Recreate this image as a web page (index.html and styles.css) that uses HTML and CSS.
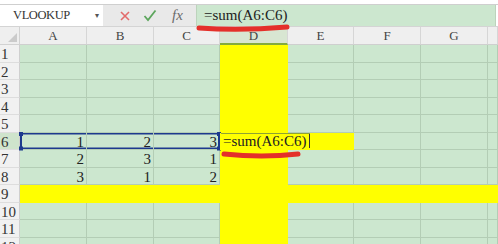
FILE: index.html
```
<!DOCTYPE html>
<html>
<head>
    <link rel="stylesheet" href="styles.css">
</head>
<body>
    <div class="toolbar">
        <div class="name-box">
            <span class="name-text">VLOOKUP</span>
            <span class="name-caret">▾</span>
        </div>
        <div class="tools">
            <svg class="tool-icon" width="12" height="12" viewBox="0 0 12 12">
                <path d="M2 2 L10 10 M10 2 L2 10" stroke="#e36a6a" stroke-width="1.6" fill="none"/>
            </svg>
            <svg class="tool-icon" width="14" height="13" viewBox="0 0 14 13">
                <path d="M1.5 7 L5 11 L12.5 1.5" stroke="#5da65d" stroke-width="1.8" fill="none"/>
            </svg>
            <span class="fx">fx</span>
        </div>
        <div class="formula-bar">=sum(A6:C6)</div>
    </div>

    <div class="sheet"></div>

    <!-- red pen marks drawn over the screenshot -->
    <svg class="marks" width="498" height="244" viewBox="0 0 498 244">
        <path d="M199 28 Q 240 31 287 27" stroke="#e4302a" stroke-width="5" stroke-linecap="round" fill="none"/>
        <path d="M224 154 Q 262 158 298 154" stroke="#e4302a" stroke-width="5" stroke-linecap="round" fill="none"/>
    </svg>

    <script>
        document.addEventListener('DOMContentLoaded', function() {
            const sheet = document.querySelector('.sheet');
            const cols = ['A', 'B', 'C', 'D', 'E', 'F', 'G', ''];
            const data = {
                6: ['1', '2', '3'],
                7: ['2', '3', '1'],
                8: ['3', '1', '2']
            };

            function addCell(cls, text) {
                const div = document.createElement('div');
                div.className = cls;
                if (text) div.textContent = text;
                sheet.appendChild(div);
                return div;
            }

            // Column headers
            addCell('corner');
            cols.forEach((c, i) => {
                addCell('col-head' + (i === 3 ? ' active' : ''), c);
            });

            // Rows
            for (let r = 1; r <= 12; r++) {
                addCell('row-head' + (r === 6 ? ' active' : ''), String(r));
                cols.forEach((c, i) => {
                    let cls = 'cell';
                    if (i === 3 || r === 9 || (r === 6 && i === 4)) cls += ' yellow';
                    if (r === 6 && i < 3) {
                        cls += ' sel';
                        if (i === 0) cls += ' sel-first';
                        if (i === 2) cls += ' sel-last';
                    }
                    const value = data[r] && i < 3 ? data[r][i] : '';
                    const cell = addCell(cls, value);

                    // Cell being edited
                    if (r === 6 && i === 3) {
                        cell.classList.add('editing');
                        const editor = document.createElement('div');
                        editor.className = 'editor';
                        editor.innerHTML = '<span>=sum(A6:C6)</span><span class="text-caret"></span>';
                        cell.appendChild(editor);
                    }
                });
            }
        });
    </script>
</body>
</html>
```

FILE: styles.css
```
:root {
    --sheet-green: #cce7cf;
    --grid-line: #b3cdb5;
    --header-bg: #efefef;
    --select-blue: #1d3a8e;
    --mark-yellow: #ffff00;
}

body {
    margin: 0;
    padding-top: 4px;
    width: 498px;
    height: 244px;
    overflow: hidden;
    background: white;
    font-family: "Liberation Serif", "DejaVu Serif", serif;
    color: #222;
    position: relative;
}

.toolbar {
    display: flex;
    height: 23px;
    box-sizing: border-box;
    border-top: 1px solid #cfcfcf;
    border-bottom: 1px solid #d4d4d4;
}

.name-box {
    width: 103px;
    display: flex;
    align-items: center;
    background: white;
    box-sizing: border-box;
    padding-left: 13px;
}

.name-text {
    font-size: 12.5px;
    color: #333;
    letter-spacing: -0.4px;
}

.name-caret {
    margin-left: auto;
    margin-right: 4px;
    font-size: 8px;
    color: #555;
}

.tools {
    width: 93px;
    display: flex;
    align-items: center;
    background: #e9e9e9;
    box-sizing: border-box;
    padding-left: 16px;
    gap: 12px;
}

.fx {
    font-style: italic;
    font-size: 15px;
    color: #6b6b6b;
    margin-left: 3px;
}

.formula-bar {
    flex: 1;
    margin-right: 2px;
    background: var(--sheet-green);
    border-left: 1px solid #bcd3bc;
    border-right: 1px solid #bcd3bc;
    font-size: 15px;
    line-height: 21px;
    padding-left: 7px;
    letter-spacing: 0;
    color: #222;
}

.sheet {
    display: grid;
    grid-template-columns: 20px 67px 67px 66px 68px 66px 67px 67px 10px;
    grid-template-rows: 18px repeat(12, 17.5px);
}

.corner {
    background: var(--header-bg);
    border-right: 1px solid #d2d2d2;
    border-bottom: 1px solid #d2d2d2;
    box-sizing: border-box;
    position: relative;
}

.corner::after {
    content: '';
    position: absolute;
    right: 2px;
    bottom: 2px;
    border-left: 9px solid transparent;
    border-bottom: 9px solid #cbcbcb;
}

.col-head {
    background: var(--header-bg);
    border-right: 1px solid #d6d6d6;
    border-bottom: 1px solid #cfcfcf;
    box-sizing: border-box;
    text-align: center;
    font-size: 13px;
    line-height: 17px;
    color: #444;
}

.col-head.active {
    background: #d8e6d2;
    border-bottom: 2px solid #83ab3e;
}

.row-head {
    background: #f1f1f1;
    border-right: 1px solid #cfcfcf;
    border-bottom: 1px solid #dddddd;
    box-sizing: border-box;
    font-size: 15px;
    line-height: 18px;
    padding-left: 1px;
    color: #333;
    overflow: hidden;
}

.row-head.active {
    background: #cfe4cc;
}

.cell {
    background: var(--sheet-green);
    border-right: 1px solid var(--grid-line);
    border-bottom: 1px solid var(--grid-line);
    box-sizing: border-box;
    text-align: right;
    font-size: 15px;
    line-height: 18px;
    padding-right: 2px;
    color: #222;
}

.cell.yellow {
    background: var(--mark-yellow);
    border-color: var(--mark-yellow);
}

.sel {
    box-shadow: inset 0 1.5px 0 var(--select-blue), inset 0 -1.5px 0 var(--select-blue);
    position: relative;
}

.sel-first::before,
.sel-last::before {
    content: '';
    position: absolute;
    top: 0;
    bottom: 0;
    width: 2px;
    background: var(--select-blue);
}

.sel-first::before {
    left: 0;
}

.sel-last::before {
    right: -1px;
}

.sel-first::after,
.sel-last::after {
    content: '';
    position: absolute;
    top: -1px;
    width: 4px;
    height: 4px;
    background: var(--select-blue);
    box-shadow: 0 14.5px 0 var(--select-blue);
}

.sel-first::after {
    left: -1px;
}

.sel-last::after {
    right: -2px;
}

.editing {
    position: relative;
}

.editor {
    position: absolute;
    left: 1px;
    top: 0;
    bottom: 0;
    z-index: 2;
    display: flex;
    align-items: center;
    padding-left: 2px;
    background: var(--mark-yellow);
    border-top: 1px solid #8fa233;
    white-space: nowrap;
    text-align: left;
    font-size: 15px;
    letter-spacing: 0;
    color: #222;
}

.text-caret {
    width: 1px;
    height: 14px;
    margin-left: 3px;
    background: #333;
}

.marks {
    position: absolute;
    top: 0;
    left: 0;
    pointer-events: none;
    z-index: 5;
}
```
